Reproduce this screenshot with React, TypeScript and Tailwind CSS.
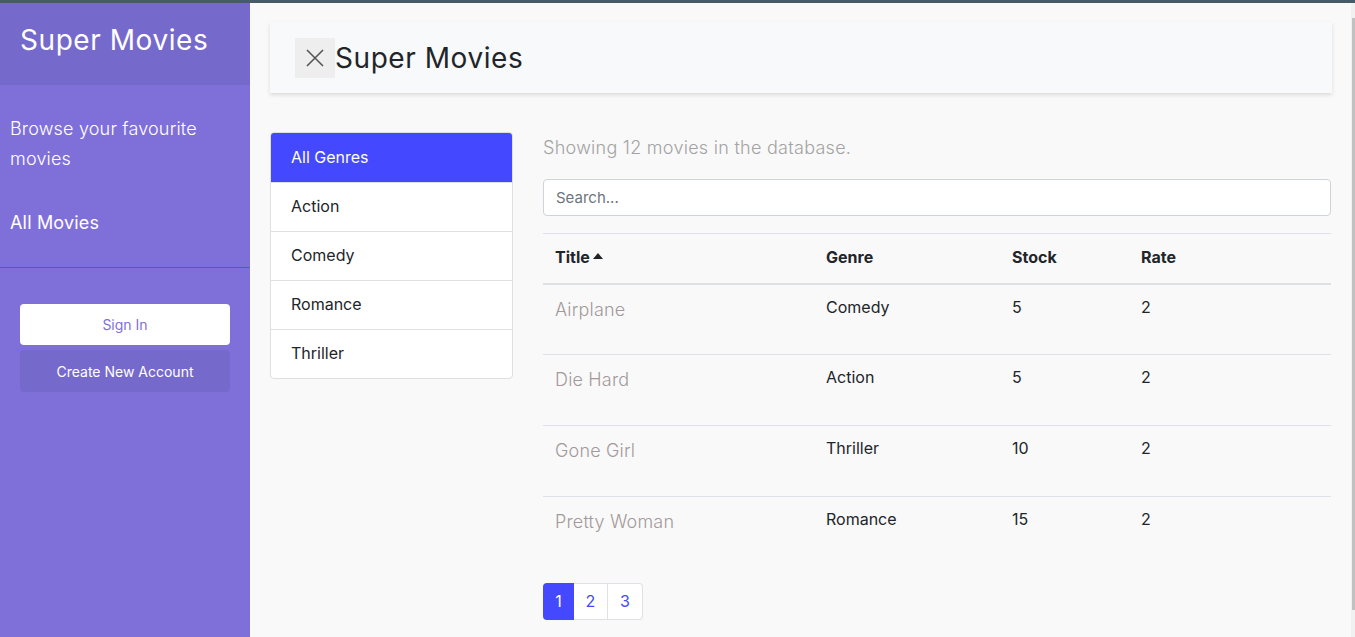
import React from 'react'

const font = { fontFamily: 'Inter, "Open Sans", sans-serif' }

const genres = ['All Genres', 'Action', 'Comedy', 'Romance', 'Thriller']

const movies = [
  { title: 'Airplane', genre: 'Comedy', stock: 5, rate: 2 },
  { title: 'Die Hard', genre: 'Action', stock: 5, rate: 2 },
  { title: 'Gone Girl', genre: 'Thriller', stock: 10, rate: 2 },
  { title: 'Pretty Woman', genre: 'Romance', stock: 15, rate: 2 },
]

function Sidebar() {
  return (
    <aside className="w-[250px] shrink-0 bg-[#7f70d9] text-white">
      <div className="h-[82px] bg-[#7669cc] px-5 pt-[18px]">
        <h1 className="text-[28px] leading-[38px] font-normal tracking-[0.02em]">Super Movies</h1>
      </div>
      <div className="px-[10px] pt-[29px]">
        <p className="text-[18px] leading-[30px] font-light tracking-[0.01em]">Browse your favourite movies</p>
        <a className="block mt-[34px] text-[18px] leading-[30px] tracking-[0.01em]">All Movies</a>
      </div>
      <div className="mt-[29px] border-t border-[#4d6b7a]" />
      <div className="px-5 pt-9 flex flex-col gap-[5px]">
        <button className="h-[41px] rounded bg-white text-[#7f70d9] text-[14px]">Sign In</button>
        <button className="h-[42px] rounded bg-[#7669cc] text-white text-[14px]">Create New Account</button>
      </div>
    </aside>
  )
}

function Header() {
  return (
    <div className="h-[71px] bg-[#f8f9fa] shadow-[0_2px_4px_rgba(0,0,0,0.12)] flex items-center pl-[25px]">
      <button className="w-10 h-10 bg-[#eeeeee] flex items-center justify-center">
        <svg width="20" height="20" viewBox="0 0 20 20" stroke="#555" strokeWidth="1.6" fill="none">
          <path d="M2 2L18 18M18 2L2 18" />
        </svg>
      </button>
      <span className="text-[28px] leading-[38px] text-[#212529] tracking-[0.02em]">Super Movies</span>
    </div>
  )
}

function GenreList() {
  return (
    <ul className="-mt-px w-[243px] shrink-0 rounded border border-[#dfdfdf] bg-white self-start overflow-hidden">
      {genres.map((g, i) => (
        <li
          key={g}
          className={
            i === 0
              ? 'h-[49px] px-5 pb-[2px] flex items-center bg-[#4448fe] text-white text-[16px]'
              : 'h-[49px] px-5 pb-[2px] flex items-center border-t border-[#dfdfdf] text-[#212529] text-[16px]'
          }
        >
          {g}
        </li>
      ))}
    </ul>
  )
}

function MoviesTable() {
  return (
    <div className="flex-1 pr-px">
      <p className="text-[18px] leading-[27px] font-light text-[#a3a3a3] mt-[1px] tracking-[0.015em]">
        Showing 12 movies in the database.
      </p>
      <input
        placeholder="Search..."
        className="mt-[18px] w-full h-[37px] rounded border border-[#ced4da] bg-white px-3 text-[15px] text-[#495057] placeholder:text-[#6c757d] outline-none"
      />
      <table className="mt-[17px] w-full border-t border-[#dee2e6] text-[16px] text-[#212529]">
        <thead>
          <tr className="h-[50px] border-b-2 border-[#dee2e6] text-left">
            <th className="pl-3 pb-[2px] w-[271px] font-bold">
              Title
              <svg className="inline ml-[3px] mb-[6px]" width="10" height="6" viewBox="0 0 10 6" fill="#212529">
                <path d="M0 6L5 0L10 6Z" />
              </svg>
            </th>
            <th className="pl-3 pb-[2px] w-[186px] font-bold">Genre</th>
            <th className="pl-3 pb-[2px] w-[129px] font-bold">Stock</th>
            <th className="pl-3 pb-[2px] font-bold">Rate</th>
          </tr>
        </thead>
        <tbody>
          {movies.map((m, i) => (
            <tr key={m.title} className={i < movies.length - 1 ? 'h-[71px] border-b border-[#dee2e6] align-top' : 'h-[71px] align-top'}>
              <td className="pl-3 pt-[11px] text-[18px] leading-[27px] font-light text-[#a39a99] tracking-[0.01em]">{m.title}</td>
              <td className="pl-3 pt-[10px] leading-6">{m.genre}</td>
              <td className="pl-3 pt-[10px] leading-6">{m.stock}</td>
              <td className="pl-3 pt-[10px] leading-6">{m.rate}</td>
            </tr>
          ))}
        </tbody>
      </table>
      <nav className="mt-[15px] flex">
        <span className="w-[31px] h-[37px] flex items-center justify-center rounded-l bg-[#4448fe] text-white">1</span>
        <span className="w-[34px] h-[37px] flex items-center justify-center bg-white border-y border-r border-[#dee2e6] text-[#4448fe]">2</span>
        <span className="w-[35px] h-[37px] flex items-center justify-center rounded-r bg-white border-y border-r border-[#dee2e6] text-[#4448fe]">3</span>
      </nav>
    </div>
  )
}

export default function App() {
  return (
    <div style={font} className="w-[1355px] h-[637px] overflow-hidden flex flex-col bg-[#f9f9f9]">
      <div className="h-[3px] bg-[#475a67] shrink-0" />
      <div className="flex flex-1 min-h-0">
        <Sidebar />
        <main className="flex-1 pl-5 pr-[19px] pt-[19px]">
          <Header />
          <div className="mt-10 flex gap-[30px]">
            <GenreList />
            <MoviesTable />
          </div>
        </main>
        <div className="w-[4px] bg-[#f1f1f1] pl-[1px] pt-[15px] pb-[27px]">
          <div className="h-full bg-[#c1c1c1]" />
        </div>
      </div>
    </div>
  )
}
